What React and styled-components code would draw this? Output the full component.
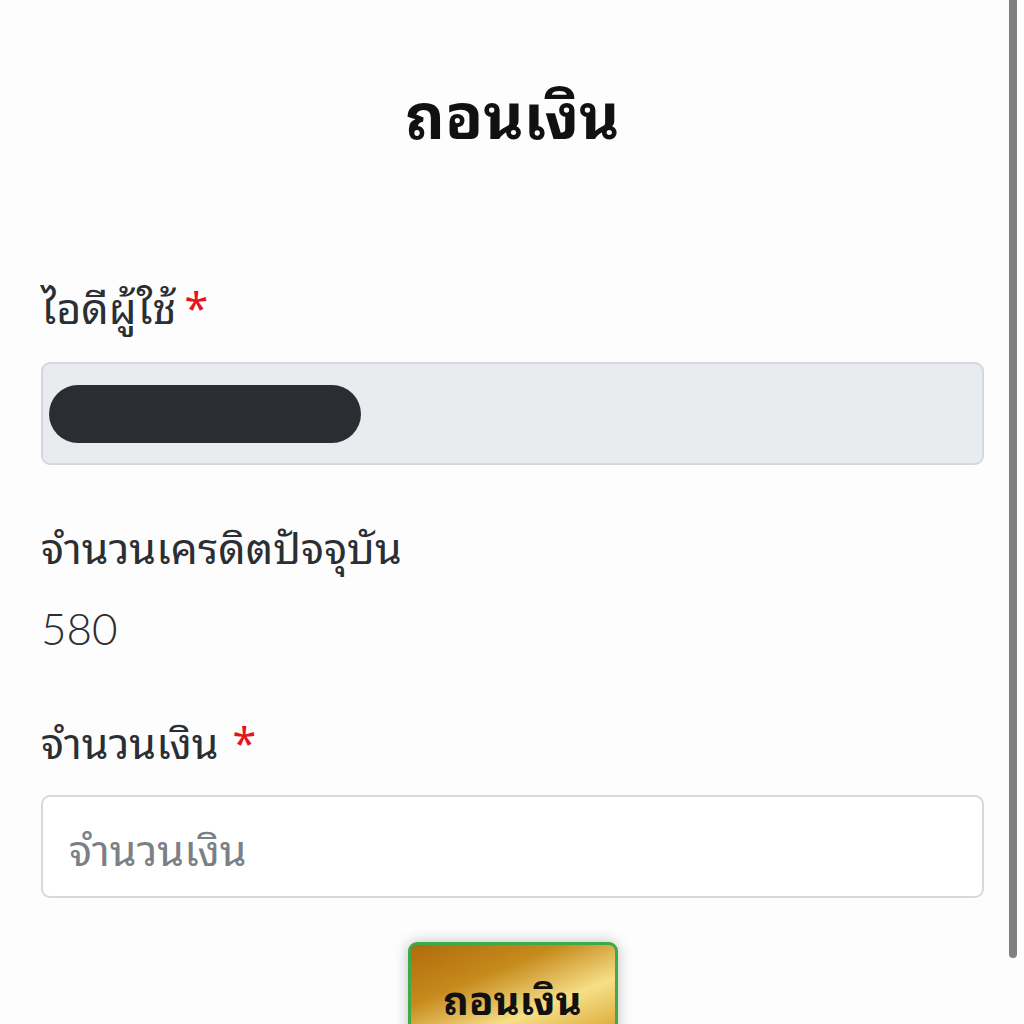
import React from "react";
import styled, { createGlobalStyle } from "styled-components";

const Global = createGlobalStyle`
  html, body {
    margin: 0;
    padding: 0;
    background: #fdfdfd;
  }
  body {
    font-family: "Noto Sans Thai Looped", "Loma", "Garuda", "Waree", "Tahoma", "Noto Sans Thai", "Noto Sans", sans-serif;
    color: #212529;
    overflow: hidden;
  }
`;

const Page = styled.div`
  position: relative;
  height: 1024px;
  overflow: hidden;
  padding: 0 40px 0 41px;
  box-sizing: border-box;
`;

const Title = styled.h1`
  margin: 0;
  padding-top: 71px;
  height: 273px;
  box-sizing: border-box;
  text-align: center;
  font-size: 62px;
  font-weight: 700;
  line-height: 80px;
  color: #111;
`;

const Form = styled.form`
  display: flex;
  flex-direction: column;
`;

const Label = styled.label`
  display: block;
  font-size: 43px;
  line-height: 64px;
  color: #2b2f33;
  margin-bottom: ${(p) => p.$gap || 0}px;
`;

const Star = styled.span`
  color: #e8131a;
  margin-left: ${(p) => p.$space || 8}px;
`;

const Field = styled.div`
  height: 103px;
  box-sizing: border-box;
  border: 2px solid ${(p) => (p.$readonly ? "#d4d7dc" : "#d6d8dc")};
  border-radius: 9px;
  background: ${(p) => (p.$readonly ? "#e9ecef" : "#ffffff")};
  display: flex;
  align-items: center;
  padding: 0 6px;
  margin-bottom: ${(p) => p.$after || 0}px;
`;

const Redacted = styled.div`
  width: 312px;
  height: 58px;
  border-radius: 29px;
  background: #2a2e32;
`;

const Input = styled.input`
  flex: 1;
  border: none;
  outline: none;
  background: transparent;
  font-family: inherit;
  font-size: 43px;
  padding: 0 20px;
  color: #212529;
  &::placeholder {
    color: #7b8087;
  }
`;

const Value = styled.div`
  font-family: "Lato", "Noto Sans", sans-serif;
  font-size: 44px;
  font-weight: 300;
  color: #2b2f33;
  line-height: 56px;
  margin: 23px 0 52px 0;
`;

const Actions = styled.div`
  display: flex;
  justify-content: center;
  padding-top: 44px;
`;

const GoldButton = styled.button`
  width: 210px;
  height: 110px;
  border: 3px solid #3daa48;
  border-radius: 9px;
  background: linear-gradient(
    158deg,
    #b06c0c 0%,
    #c68a1c 32%,
    #f6df88 62%,
    #e4b94e 82%,
    #c88b1a 100%
  );
  box-shadow: 0 0 14px rgba(0, 0, 0, 0.25);
  font-family: inherit;
  font-size: 40px;
  font-weight: 700;
  color: #111;
  padding: 22px 0 0;
  line-height: 60px;
  display: flex;
  justify-content: center;
  align-items: flex-start;
`;

const Scrollbar = styled.div`
  position: absolute;
  top: 0;
  right: 7px;
  width: 8px;
  height: 958px;
  background: #808080;
  border-radius: 0 0 4px 4px;
`;

export default function App() {
  return (
    <Page>
      <Global />
      <Title>ถอนเงิน</Title>
      <Form onSubmit={(e) => e.preventDefault()}>
        <Label $gap={25}>
          ไอดีผู้ใช้<Star $space={8}>*</Star>
        </Label>
        <Field $readonly $after={48}>
          <Redacted />
        </Field>
        <Label>จำนวนเครดิตปัจจุบัน</Label>
        <Value>580</Value>
        <Label $gap={23}>
          จำนวนเงิน<Star $space={14}>*</Star>
        </Label>
        <Field>
          <Input placeholder="จำนวนเงิน" />
        </Field>
        <Actions>
          <GoldButton type="submit">ถอนเงิน</GoldButton>
        </Actions>
      </Form>
      <Scrollbar />
    </Page>
  );
}
